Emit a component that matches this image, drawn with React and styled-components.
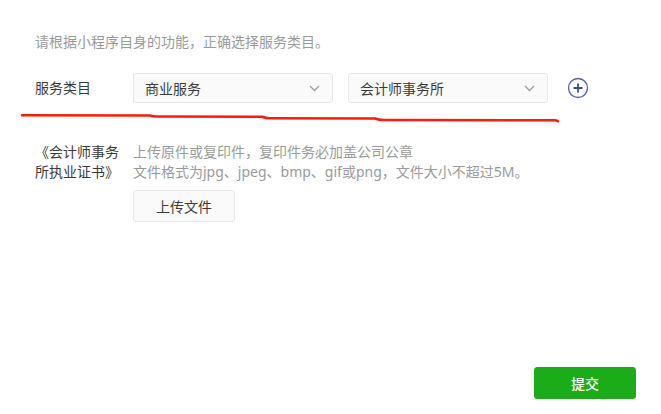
import React from "react";
import styled, { createGlobalStyle } from "styled-components";

const Global = createGlobalStyle`
  html, body { margin: 0; padding: 0; background: #fff; }
  body { font-family: "Noto Sans", "Noto Sans CJK SC", sans-serif; font-size: 14px; color: #353535; }
`;

const Page = styled.div`
  position: relative;
  width: 661px;
  height: 414px;
  box-sizing: border-box;
  padding: 32px 25px 15px 35px;
  display: flex;
  flex-direction: column;
`;

const Hint = styled.div`
  font-size: 14px;
  line-height: 20px;
  color: #9a9a9a;
`;

const FormRow = styled.div`
  display: flex;
  align-items: ${(p) => (p.$top ? "flex-start" : "center")};
  margin-top: ${(p) => p.$mt}px;
`;

const Label = styled.div`
  width: 88px;
  margin-right: 10px;
  flex-shrink: 0;
  font-size: 14px;
  line-height: 20px;
  color: #3a3a3a;
`;

const Selects = styled.div`
  display: flex;
  align-items: center;
  gap: 15px;
`;

const Select = styled.div`
  width: 200px;
  height: 30px;
  box-sizing: border-box;
  border: 1px solid #e7e7eb;
  border-radius: 3px;
  background: #fafafa;
  display: flex;
  align-items: center;
  justify-content: space-between;
  padding: 0 12px 0 11px;
  font-size: 14px;
  color: #3a3a3a;
`;

const AddButton = styled.button`
  margin-left: 19px;
  width: 22px;
  height: 22px;
  padding: 0;
  border: none;
  background: none;
  display: flex;
  align-items: center;
  justify-content: center;
`;

const Field = styled.div`
  display: flex;
  flex-direction: column;
  align-items: flex-start;
`;

const Desc = styled.div`
  font-size: 14px;
  line-height: 20px;
  color: #9a9a9a;
`;

const Button = styled.button`
  width: ${(p) => p.$w || 102}px;
  height: 32px;
  box-sizing: border-box;
  border-radius: 3px;
  font-family: inherit;
  font-size: 14px;
  cursor: pointer;
  border: 1px solid ${(p) => (p.$primary ? "#1aad19" : "#e7e7eb")};
  background: ${(p) => (p.$primary ? "#1aad19" : "#fafafa")};
  color: ${(p) => (p.$primary ? "#fff" : "#3a3a3a")};
  font-weight: ${(p) => (p.$primary ? 500 : 400)};
  margin-top: ${(p) => p.$mt || 0}px;
`;

const Footer = styled.div`
  margin-top: auto;
  display: flex;
  justify-content: flex-end;
`;

const Mark = styled.svg`
  position: absolute;
  left: 0;
  top: 0;
  pointer-events: none;
`;

const Chevron = () => (
  <svg width="11" height="7" viewBox="0 0 11 7">
    <path d="M1 1l4.5 4.5L10 1" fill="none" stroke="#9c9c9c" strokeWidth="1.3" />
  </svg>
);

const PlusCircle = () => (
  <svg width="22" height="22" viewBox="0 0 22 22">
    <circle cx="11" cy="11" r="9.5" fill="none" stroke="#56669a" strokeWidth="1.3" />
    <path d="M6.5 11h9M11 6.5v9" stroke="#3f4f86" strokeWidth="1.8" />
  </svg>
);

export default function App() {
  return (
    <>
      <Global />
      <Page>
        <Hint>请根据小程序自身的功能，正确选择服务类目。</Hint>
        <FormRow $mt={21}>
          <Label>服务类目</Label>
          <Selects>
            <Select>
              <span>商业服务</span>
              <Chevron />
            </Select>
            <Select>
              <span>会计师事务所</span>
              <Chevron />
            </Select>
          </Selects>
          <AddButton aria-label="添加">
            <PlusCircle />
          </AddButton>
        </FormRow>
        <FormRow $top $mt={39}>
          <Label>《会计师事务所执业证书》</Label>
          <Field>
            <Desc>上传原件或复印件，复印件务必加盖公司公章</Desc>
            <Desc>文件格式为jpg、jpeg、bmp、gif或png，文件大小不超过5M。</Desc>
            <Button $w={102} $mt={8}>上传文件</Button>
          </Field>
        </FormRow>
        <Footer>
          <Button $primary $w={102}>提交</Button>
        </Footer>
        <Mark width="661" height="414" viewBox="0 0 661 414">
          <path
            d="M22 115.3 L150 115.5 Q153 116.5 156 116.5 L262 116.8 Q266 118.3 270 118.3 L375 118.5 Q379 120 383 120 L555 120.3 Q557 120.6 558 121.3"
            fill="none"
            stroke="#ff1a0e"
            strokeWidth="2.6"
            strokeLinecap="round"
            strokeLinejoin="round"
          />
        </Mark>
      </Page>
    </>
  );
}
